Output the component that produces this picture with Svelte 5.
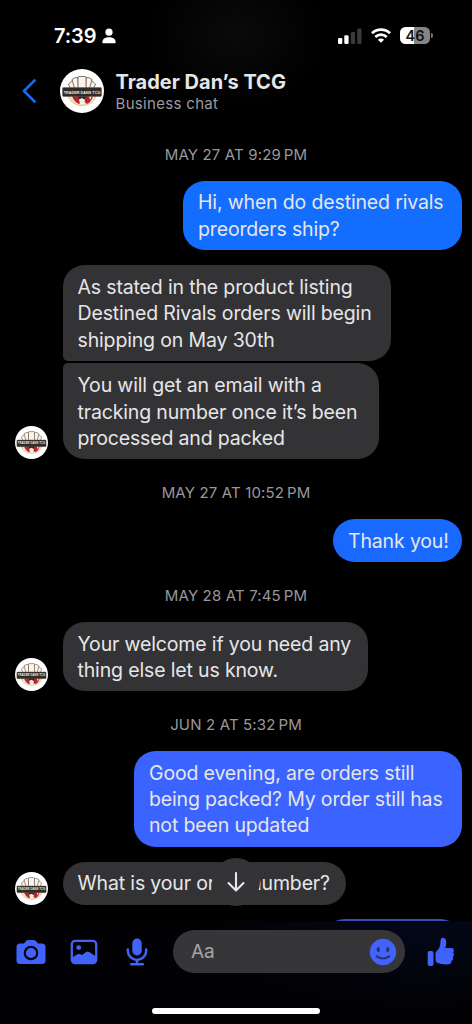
<script lang="ts">
  type Message = { text: string; width: number; tone?: string; joined?: string }
  type Group = { time?: string; from: 'me' | 'shop'; messages: Message[] }

  const groups: Group[] = [
    {
      time: 'MAY 27 AT 9:29\u2009PM',
      from: 'me',
      messages: [{ text: 'Hi, when do destined rivals\npreorders ship?', width: 279, tone: '#136dfe' }]
    },
    {
      from: 'shop',
      messages: [
        {
          text: 'As stated in the product listing\nDestined Rivals orders will begin\nshipping on May 30th',
          width: 328.5,
          joined: 'below'
        },
        {
          text: 'You will get an email with a\ntracking number once it’s been\nprocessed and packed',
          width: 316.5,
          joined: 'above'
        }
      ]
    },
    {
      time: 'MAY 27 AT 10:52\u2009PM',
      from: 'me',
      messages: [{ text: 'Thank you!', width: 129, tone: '#1a69ff' }]
    },
    {
      time: 'MAY 28 AT 7:45\u2009PM',
      from: 'shop',
      messages: [{ text: 'Your welcome if you need any\nthing else let us know.', width: 305.5 }]
    },
    {
      time: 'JUN 2 AT 5:32\u2009PM',
      from: 'me',
      messages: [
        {
          text: 'Good evening, are orders still\nbeing packed? My order still has\nnot been updated',
          width: 328,
          tone: '#3b63ff'
        }
      ]
    },
    {
      from: 'shop',
      messages: [{ text: 'What is your order number?', width: 283 }]
    }
  ]

  let draft = ''
</script>

{#snippet logo()}
  <svg class="logo" viewBox="0 0 44 44" aria-hidden="true">
    <circle cx="22" cy="22" r="22" fill="#fff" />
    <path d="M8 25a14 11.500 0 0 0 28 0z" fill="#f3e6c8" stroke="#d9c390" />
    <path d="M14 26h16a9 8.800 0 0 1-16 0z" fill="#2c2523" />
    <path d="M12 27h6l3 6.500-2 1.500q-5-2-7-8zM25 29l3-2h5q-1.500 6-6 8l-3-2.500z" fill="#c01f2e" />
    <path d="M19 30.500l3-1.500 3 2-1 4h-4zM29 27h3l-2 4z" fill="#f8efdf" />
    <g fill="#fbf4e8" stroke="#4c4036" stroke-width=".7">
      <path d="M8.500 15l4.500-4 4 10h-6z" />
      <path d="M35.500 15L31 11l-4 10h6z" />
      <path d="M12 10.500q2.500-2.500 6-2l.5 12.500H15z" />
      <path d="M32 10.500q-2.500-2.500-6-2L25.500 21H29z" />
      <rect x="18" y="7.500" width="8" height="13.500" rx="1" />
    </g>
    <rect x="2.500" y="18.500" width="39" height="9" rx="1" fill="#302b29" stroke="#665c54" stroke-width=".5" />
    <text x="22" y="24.500" text-anchor="middle">TRADER DANS TCG</text>
  </svg>
{/snippet}

<main class="screen">
  <div class="status">
    <span class="clock">7:39</span>
    <svg class="person" width="14" height="16" viewBox="0 0 14 16" fill="#fff">
      <circle cx="7" cy="4.200" r="3.600" />
      <path d="M.3 14.600C.3 11 3 9.200 7 9.200s6.700 1.800 6.700 5.400q0 .6-.7.6H1q-.7 0-.7-.6z" />
    </svg>
    <div class="indicators">
      <svg width="24" height="16" viewBox="0 0 24 16">
        <rect x="0" y="10" width="4.300" height="6" rx="1.200" fill="#fff" />
        <rect x="6.300" y="7.200" width="4.300" height="8.800" rx="1.200" fill="#fff" />
        <rect x="12.800" y="4" width="4.300" height="12" rx="1.200" fill="#3a3a3b" />
        <rect x="19.200" y="0.500" width="4.300" height="15.500" rx="1.200" fill="#3a3a3b" />
      </svg>
      <svg width="20" height="15" viewBox="0 0 20 15" fill="none" stroke="#fff" stroke-width="2.700">
        <path d="M1 5.200a13 13 0 0 1 18 0" />
        <path d="M4.300 9a8.200 8.200 0 0 1 11.400 0" />
        <path d="M10 14.800l-3.100-3.100a4.400 4.400 0 0 1 6.200 0z" fill="#fff" stroke="none" />
      </svg>
      <div class="battery"><span>46</span></div>
      <i class="nub"></i>
    </div>
  </div>

  <header>
    <button class="back" aria-label="Back">
      <svg width="14" height="24" viewBox="0 0 14 24" fill="none" stroke="#1769f5" stroke-width="2.600" stroke-linecap="round" stroke-linejoin="round">
        <path d="M12.500 1.500L2 12l10.500 10.500" />
      </svg>
    </button>
    {@render logo()}
    <div class="who">
      <h1>Trader Dan’s TCG</h1>
      <p>Business chat</p>
    </div>
  </header>

  <section class="thread">
    {#each groups as group}
      {#if group.time}
        <time>{group.time}</time>
      {/if}
      <div class="group {group.from}" class:gap={!group.time}>
        {#if group.from === 'shop'}
          <div class="avatar">{@render logo()}</div>
        {/if}
        <div class="stack">
          {#each group.messages as message}
            <p
              class="bubble {message.joined ?? ''}"
              style:width="{message.width}px"
              style:background={message.tone}
            >{message.text}</p>
          {/each}
        </div>
      </div>
    {/each}
    <div class="next"></div>
    <button class="jump" aria-label="Scroll to latest">
      <svg width="20" height="22" viewBox="0 0 20 22" fill="none" stroke="#e8e8ea" stroke-width="2.100" stroke-linecap="round" stroke-linejoin="round">
        <path d="M10 2v17M2.500 12l7.500 7.500 7.500-7.500" />
      </svg>
    </button>
  </section>

  <footer>
    <div class="composer">
      <svg class="camera" width="30" height="26" viewBox="0 0 30 26">
        <path d="M4 4.500h4l2.300-2.700Q11.300 1 12.500 1h5q1.200 0 2.200.8L22 4.500h4q3.500 0 3.500 3.500v13.500Q29.500 25 26 25H4Q.5 25 .5 21.500V8Q.5 4.500 4 4.500z" fill="#4263fb" />
        <circle cx="15" cy="14" r="6.200" fill="#4263fb" stroke="#05060c" stroke-width="2.200" />
      </svg>
      <svg class="photo" width="28" height="26" viewBox="0 0 28 26">
        <rect x="1.800" y="1.800" width="24.400" height="22.400" rx="3.500" fill="none" stroke="#4263fb" stroke-width="2.300" />
        <circle cx="8.700" cy="8.600" r="2.400" fill="#4263fb" />
        <path d="M2 18.500l5.500-3.200q1.500-.9 3 0l1.500.6 4.200-3q1.500-1 3 0L26 17.500V24H2z" fill="#4263fb" />
      </svg>
      <svg class="mic" width="22" height="28" viewBox="0 0 22 28" fill="none" stroke="#4263fb" stroke-width="2.500" stroke-linecap="round">
        <rect x="6.300" y="0.500" width="9.400" height="17" rx="4.700" fill="#4263fb" stroke="none" />
        <path d="M1.800 11.500v1.200a9.200 9.200 0 0 0 18.400 0v-1.200M11 22v4M5.200 26.200h11.600" />
      </svg>
      <div class="field">
        <input placeholder="Aa" bind:value={draft} />
        <svg width="28" height="28" viewBox="0 0 28 28">
          <circle cx="14" cy="14" r="13.200" fill="#4263fb" />
          <ellipse cx="9.300" cy="11.500" rx="1.700" ry="2.500" fill="#29316e" />
          <ellipse cx="18.700" cy="11.500" rx="1.700" ry="2.500" fill="#29316e" />
          <path d="M7.800 18.300q6.200 4.400 12.400 0" fill="none" stroke="#29316e" stroke-width="2.200" stroke-linecap="round" />
        </svg>
      </div>
      <svg class="like" width="28" height="30" viewBox="0 0 28 30" fill="#4263fb">
        <rect x=".7" y="14" width="5.800" height="15" rx="2" />
        <path d="M8.500 16.500q0-1.500 1.200-2.500 3.300-2.700 3.600-6.500l.3-4.500Q13.900.8 15.800.8q3.400 0 3.400 5 0 2.300-.9 5.200h5.900q2.600 0 2.600 2.400 0 1.300-.9 2 1.300.8 1.100 2.400-.1 1.400-1.400 2.100.9 1 .5 2.300-.4 1.200-1.700 1.600.4 1.200-.4 2.200-1.100 1.500-4.500 1.500-6 0-8.900-1.400-2.100-1-2.100-3.600z" />
      </svg>
    </div>
    <div class="home"></div>
  </footer>
</main>

<style>
  :global(body) {
    background: #000;
  }

  .screen {
    box-sizing: border-box;
    width: 472px;
    height: 1024px;
    display: flex;
    flex-direction: column;
    overflow: hidden;
    background: radial-gradient(ellipse 90px 75px at 236px 35px, #0a0a0b, #000);
    color: #e6e6e8;
    font-family: Inter, "Liberation Sans", sans-serif;
  }

  h1,
  p {
    margin: 0;
  }

  button {
    padding: 0;
    border: 0;
    background: none;
  }

  svg {
    display: block;
    flex: none;
  }

  .status {
    flex: none;
    box-sizing: border-box;
    height: 60px;
    padding: 11px 39px 0 54px;
    display: flex;
    align-items: center;
  }

  .clock {
    width: 43px;
    font-size: 20px;
    font-weight: 600;
    letter-spacing: -0.1px;
    color: #fff;
  }

  .person {
    margin-left: 5px;
  }

  .indicators {
    margin-left: auto;
    display: flex;
    align-items: center;
  }

  .indicators svg {
    margin-right: 9px;
  }

  .battery {
    width: 30px;
    height: 17px;
    border-radius: 5.5px;
    background: linear-gradient(90deg, #fff 47%, #858585 47%);
    color: #111;
    font-size: 14.5px;
    font-weight: 600;
    line-height: 17px;
    text-align: center;
  }

  .nub {
    width: 2px;
    height: 5px;
    margin-left: 1px;
    border-radius: 0 2px 2px 0;
    background: #777;
  }

  header {
    flex: none;
    height: 61px;
    display: flex;
    align-items: flex-start;
  }

  .back {
    margin: 18.5px 0 0 22px;
  }

  .logo {
    width: 100%;
    height: auto;
  }

  .logo text {
    font-family: "Liberation Sans", sans-serif;
    font-size: 3.8px;
    font-weight: 700;
    fill: #f2e9da;
  }

  header > .logo {
    width: 44px;
    margin: 9px 0 0 24px;
  }

  .who {
    margin: 10px 0 0 11.5px;
  }

  h1 {
    font-size: 20px;
    font-weight: 700;
    line-height: 25px;
    white-space: nowrap;
  }

  .who p {
    font-size: 15px;
    line-height: 18px;
    letter-spacing: 0.32px;
    color: #9b9b9e;
  }

  .thread {
    position: relative;
    flex: none;
    height: 800px;
    overflow: hidden;
    display: flex;
    flex-direction: column;
  }

  time {
    flex: none;
    height: 52.5px;
    padding-top: 7px;
    line-height: 54px;
    text-align: center;
    font-size: 15px;
    letter-spacing: 0.15px;
    color: #98989c;
  }

  .group {
    flex: none;
    display: flex;
    padding: 0 10px 0 15px;
    align-items: flex-end;
  }

  .group.me {
    justify-content: flex-end;
  }

  .gap {
    margin-top: 14.8px;
  }

  .avatar {
    width: 33px;
    margin-right: 14.5px;
  }

  .stack {
    display: flex;
    flex-direction: column;
    gap: 2.6px;
  }

  .bubble {
    box-sizing: border-box;
    padding: 8.9px 0 7.9px 15px;
    border-radius: 21.5px;
    background: #333336;
    font-size: 19.5px;
    line-height: 26.4px;
    letter-spacing: -0.15px;
    white-space: pre;
  }

  .below {
    border-bottom-left-radius: 5px;
  }

  .above {
    border-top-left-radius: 5px;
  }

  .next {
    flex: none;
    align-self: flex-end;
    width: 139px;
    height: 43px;
    margin: 14.5px 10px 0 0;
    border-radius: 21.5px;
    background: #4048b5;
  }

  .jump {
    position: absolute;
    left: 212px;
    top: 737px;
    width: 48px;
    height: 48px;
    border-radius: 50%;
    background: #343437;
    display: grid;
    place-items: center;
  }

  footer {
    flex: none;
    height: 103px;
    background: radial-gradient(ellipse 210px 75px at 420px 8px, #030718, #020204);
  }

  .composer {
    height: 61px;
    padding-left: 16px;
    display: flex;
    align-items: center;
  }

  .photo {
    margin-left: 24px;
  }

  .mic {
    margin-left: 28px;
  }

  .field {
    box-sizing: border-box;
    width: 232px;
    height: 43.5px;
    margin-left: 25px;
    padding: 0 8px 0 18px;
    border-radius: 22px;
    background: #363638;
    display: flex;
    align-items: center;
  }

  .field input {
    flex: 1;
    min-width: 0;
    padding: 0;
    border: 0;
    outline: 0;
    background: none;
    color: #e6e6e8;
    font: 19px Inter, "Liberation Sans", sans-serif;
  }

  .field input::placeholder {
    color: #a5a5a8;
    opacity: 1;
  }

  .like {
    margin-left: 22px;
  }

  .home {
    width: 168px;
    height: 6px;
    margin: 26px auto 0;
    border-radius: 3px;
    background: #fff;
  }
</style>
